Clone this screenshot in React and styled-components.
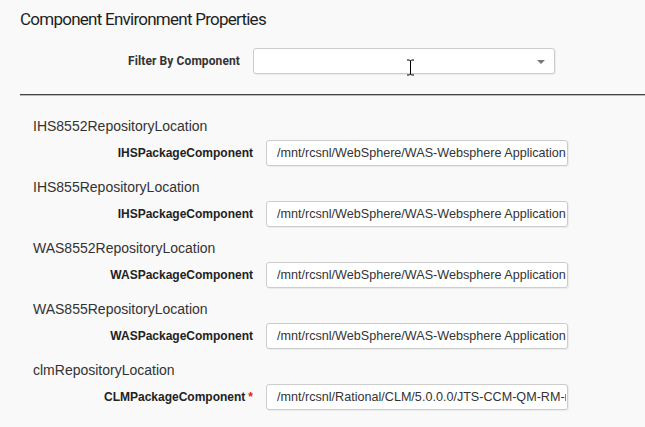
import React from "react";
import styled, { createGlobalStyle } from "styled-components";

const GlobalStyle = createGlobalStyle`
  html, body {
    margin: 0;
    padding: 0;
    background: #f9f9f9;
  }
  body {
    font-family: "Liberation Sans", Arial, sans-serif;
    color: #333;
  }
`;

const Page = styled.div`
  padding: 9px 0 0 20px;
  width: 625px;
  overflow: hidden;
`;

const Title = styled.h1`
  margin: 0 0 19px 0;
  font-family: Roboto, "Liberation Sans", sans-serif;
  font-weight: 400;
  font-size: 17px;
  line-height: 20px;
  letter-spacing: -0.75px;
  color: #1e1e1e;
`;

const Row = styled.div`
  display: grid;
  grid-template-columns: 220px 302px;
  column-gap: 13px;
  align-items: center;
`;

const FilterLabel = styled.label`
  text-align: right;
  font-family: Roboto, "Liberation Sans", sans-serif;
  font-weight: 700;
  font-size: 12px;
  letter-spacing: 0.1px;
  color: #333;
`;

const SelectBox = styled.div`
  position: relative;
  height: 26px;
  box-sizing: border-box;
  background: #fff;
  border: 1px solid #ccc;
  border-radius: 3px;
  box-shadow: 1px 1px 1px rgba(0, 0, 0, 0.06);
`;

const Caret = styled.span`
  position: absolute;
  right: 9px;
  top: 11px;
  width: 0;
  height: 0;
  border-left: 4px solid transparent;
  border-right: 4px solid transparent;
  border-top: 4px solid #777;
`;

const Cursor = styled.svg`
  position: absolute;
  left: 152px;
  top: 10px;
`;

const Divider = styled.hr`
  margin: 20px 0 20px 0;
  border: 0;
  border-top: 1px solid #444;
  border-bottom: 1px solid #bbb;
  height: 0;
`;

const Section = styled.div`
  padding-left: 13px;
  margin-bottom: 11px;
`;

const Heading = styled.div`
  font-size: 14px;
  line-height: 20px;
  color: #333;
  margin-bottom: 4px;
`;

const FieldLabel = styled.label`
  text-align: right;
  font-weight: 700;
  font-size: 12px;
  color: #222;
`;

const Required = styled.span`
  color: #e02020;
  margin-left: 3px;
`;

const Input = styled.input`
  width: 302px;
  height: 26px;
  box-sizing: border-box;
  padding: 0 1px 0 10px;
  font-family: "Liberation Sans", Arial, sans-serif;
  font-size: 12.6px;
  color: #333;
  background: #fff;
  border: 1px solid #ccc;
  border-radius: 3px;
  box-shadow: 1px 1px 1px rgba(0, 0, 0, 0.06);
  outline: none;
`;

const WAS =
  "/mnt/rcsnl/WebSphere/WAS-Websphere Application Server/8.5.5.2/was.repo.8550.nd.zip";

const sections = [
  { heading: "IHS8552RepositoryLocation", label: "IHSPackageComponent", value: WAS },
  { heading: "IHS855RepositoryLocation", label: "IHSPackageComponent", value: WAS },
  { heading: "WAS8552RepositoryLocation", label: "WASPackageComponent", value: WAS },
  { heading: "WAS855RepositoryLocation", label: "WASPackageComponent", value: WAS },
  {
    heading: "clmRepositoryLocation",
    label: "CLMPackageComponent",
    value: "/mnt/rcsnl/Rational/CLM/5.0.0.0/JTS-CCM-QM-RM-repo-5.0.zip",
    required: true,
  },
];

const App = () => {
  return (
    <Page>
      <GlobalStyle />
      <Title>Component Environment Properties</Title>
      <Row>
        <FilterLabel>Filter By Component</FilterLabel>
        <SelectBox>
          <Caret />
          <Cursor width="9" height="17" viewBox="0 0 9 17">
            <path
              d="M1 1h2.5L4.5 2l1-1H8M4.5 2v13M1 16h2.5l1-1 1 1H8"
              fill="none"
              stroke="#000"
              strokeWidth="1"
            />
          </Cursor>
        </SelectBox>
      </Row>
      <Divider />
      {sections.map((s, i) => (
        <Section key={i}>
          <Heading>{s.heading}</Heading>
          <Row>
            <FieldLabel>
              {s.label}
              {s.required && <Required>*</Required>}
            </FieldLabel>
            <Input defaultValue={s.value} readOnly />
          </Row>
        </Section>
      ))}
    </Page>
  );
};

export default App;
